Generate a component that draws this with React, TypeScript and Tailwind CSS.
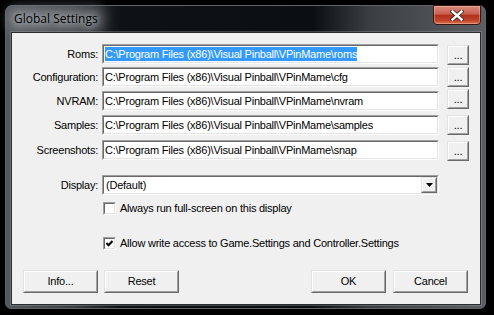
import React from "react";

const FONT = "font-['Liberation_Sans',Arial,sans-serif] tracking-[-0.23px]";

function Sunken({ className, children }: { className: string; children?: React.ReactNode }) {
  return (
    <div className={"border border-t-[#a0a0a0] border-l-[#a0a0a0] border-b-white border-r-white " + className}>
      <div className="h-full w-full border border-t-[#696969] border-l-[#696969] border-b-[#e3e3e3] border-r-[#e3e3e3] bg-white flex items-center">
        {children}
      </div>
    </div>
  );
}

function Raised({ className, children, inner }: { className: string; children?: React.ReactNode; inner?: string }) {
  return (
    <div className={"border border-t-[#e3e3e3] border-l-[#e3e3e3] border-b-[#696969] border-r-[#696969] bg-[#f0f0f0] " + className}>
      <div className={"h-full w-full border border-t-white border-l-white border-b-[#a0a0a0] border-r-[#a0a0a0] flex justify-center " + (inner ?? "items-center")}>
        {children}
      </div>
    </div>
  );
}

const rows = [
  { label: "Roms:", path: "C:\\Program Files (x86)\\Visual Pinball\\VPinMame\\roms", mt: "mt-[11px]", sel: true, btn: "mt-[1px]" },
  { label: "Configuration:", path: "C:\\Program Files (x86)\\Visual Pinball\\VPinMame\\cfg", mt: "mt-[3px]", sel: false, btn: "" },
  { label: "NVRAM:", path: "C:\\Program Files (x86)\\Visual Pinball\\VPinMame\\nvram", mt: "mt-[4px]", sel: false, btn: "-mt-[2px]" },
  { label: "Samples:", path: "C:\\Program Files (x86)\\Visual Pinball\\VPinMame\\samples", mt: "mt-[4px]", sel: false, btn: "" },
  { label: "Screenshots:", path: "C:\\Program Files (x86)\\Visual Pinball\\VPinMame\\snap", mt: "mt-[5px]", sel: false, btn: "mt-[1px]" },
];

export default function App() {
  return (
    <div className={"w-[494px] h-[315px] bg-black pt-[5px] pl-[5px] text-[11px] text-black " + FONT}>
      <div className="w-[481px] h-[304px] rounded-t-[7px] rounded-b-[6px] border border-[#5f6368] bg-[linear-gradient(90deg,#54585d_0%,#3c4045_14%,#0e1116_24%,#0b0e13_64%,#3b3f44_76%,#5b5f64_100%)] flex flex-col pl-[5px] pr-[4px] pb-[3px]">
        {/* title bar */}
        <div className="h-[26px] flex justify-between items-start">
          <span className="ml-[1px] mt-[4px] px-[2px] -mx-[2px] rounded-[6px] bg-[rgba(150,155,160,0.35)] shadow-[0_0_10px_6px_rgba(150,155,160,0.35)] text-[12px] tracking-normal font-['Open_Sans','Noto_Sans',sans-serif] text-black [text-shadow:0_0_6px_rgba(215,220,225,0.95),0_0_10px_rgba(215,220,225,0.85)]">
            Global Settings
          </span>
          <div className="-mt-[1px] w-[48px] h-[20px] rounded-b-[4px] border border-[#3b1610] shadow-[inset_0_0_0_1px_rgba(255,220,210,0.35)] bg-[linear-gradient(180deg,#d98a7c_0%,#c8604c_45%,#b2311c_52%,#c0422a_80%,#d9774f_100%)] flex items-center justify-center">
            <svg width="14" height="11" viewBox="0 0 14 11">
              <path d="M2.5 1.5 L11.5 9.5 M11.5 1.5 L2.5 9.5" stroke="#3a2a28" strokeWidth="4.2" strokeLinecap="square" />
              <path d="M2.5 1.5 L11.5 9.5 M11.5 1.5 L2.5 9.5" stroke="#ffffff" strokeWidth="2.4" strokeLinecap="square" />
            </svg>
          </div>
        </div>
        {/* client */}
        <div className="w-[470px] h-[273px] border border-[#2b2b2b] shadow-[0_0_0_1px_rgba(160,165,170,0.35)] bg-[#f0f0f0] flex flex-col">
          {rows.map((r) => (
            <div key={r.label} className={"flex items-start h-[20px] " + r.mt}>
              <div className="w-[86px] h-[20px] flex items-center justify-end">{r.label}</div>
              <Sunken className="ml-[4px] w-[337px] h-[20px]">
                <span className={"ml-[1px] leading-[14px] whitespace-nowrap " + (r.sel ? "bg-[#3399ff] text-white" : "")}>{r.path}</span>
              </Sunken>
              <Raised className={"ml-[8px] w-[22px] h-[20px] " + r.btn} inner="items-end">
                <span className="leading-[13px] pb-[1px]">...</span>
              </Raised>
            </div>
          ))}
          {/* display */}
          <div className="flex items-center h-[20px] mt-[15px]">
            <div className="w-[86px] flex justify-end">Display:</div>
            <Sunken className="ml-[4px] w-[337px] h-[20px]">
              <span className="ml-[2px] flex-1">(Default)</span>
              <Raised className="w-[16px] h-[16px]">
                <svg width="7" height="4" viewBox="0 0 7 4">
                  <path d="M0 0 H7 L3.5 4 Z" fill="#000" />
                </svg>
              </Raised>
            </Sunken>
          </div>
          <div className="flex items-center h-[13px] mt-[7px] pl-[91px]">
            <Sunken className="w-[13px] h-[13px]" />
            <span className="ml-[4px]">Always run full-screen on this display</span>
          </div>
          <div className="flex items-center h-[13px] mt-[22px] pl-[91px]">
            <Sunken className="w-[13px] h-[13px]">
              <svg width="9" height="9" viewBox="0 0 9 9">
                <path d="M1.5 4 L3.5 6.2 L7.5 2" stroke="#000" strokeWidth="2" fill="none" />
              </svg>
            </Sunken>
            <span className="ml-[4px]">Allow write access to Game.Settings and Controller.Settings</span>
          </div>
          <div className="flex justify-between mt-[20px] pl-[11px] pr-[12px]">
            <div className="flex gap-[6px]">
              <Raised className="w-[75px] h-[23px]">Info...</Raised>
              <Raised className="w-[75px] h-[23px]">Reset</Raised>
            </div>
            <div className="flex gap-[7px]">
              <Raised className="w-[75px] h-[23px]">OK</Raised>
              <Raised className="w-[75px] h-[23px]">Cancel</Raised>
            </div>
          </div>
        </div>
      </div>
    </div>
  );
}
